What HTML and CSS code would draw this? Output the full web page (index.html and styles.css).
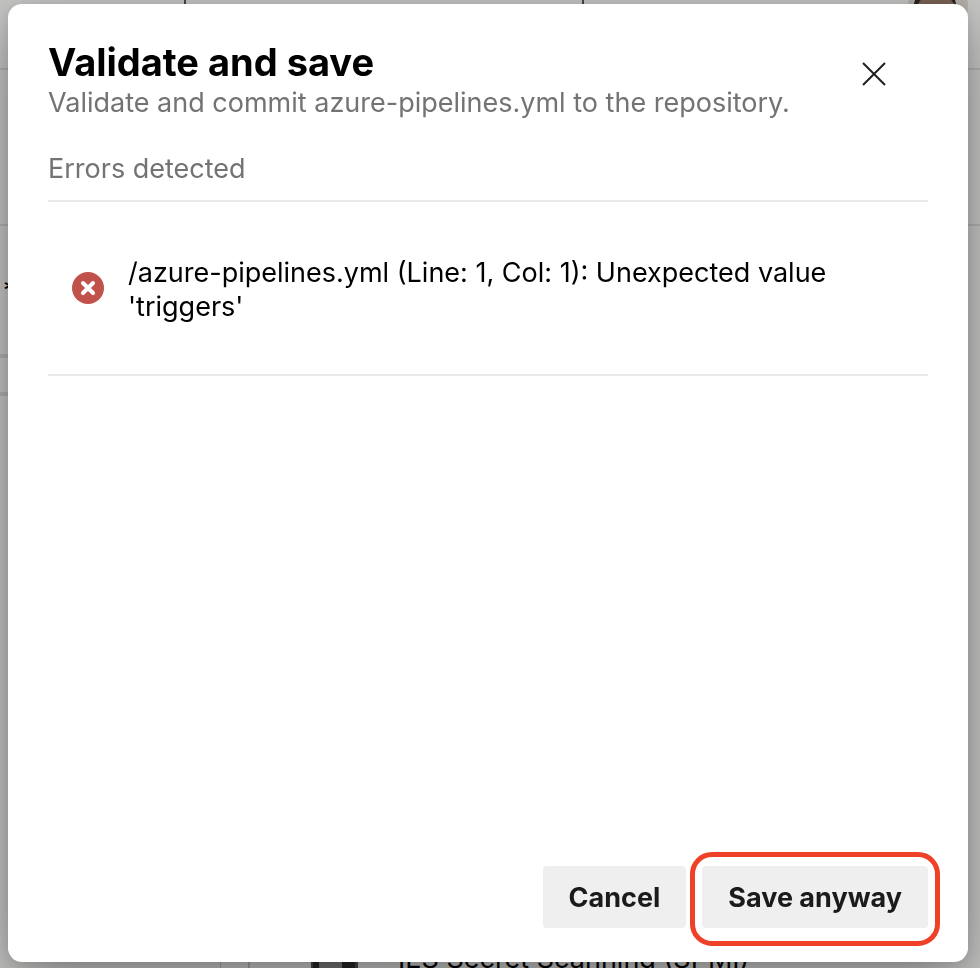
FILE: index.html
```html
<!DOCTYPE html>
<html lang="en">
<head>
<meta charset="utf-8">
<meta name="viewport" content="width=device-width, initial-scale=1">
<title>Validate and save</title>
<link rel="stylesheet" href="styles.css">
</head>
<body>
<div class="page" aria-hidden="true">
  <div class="page-header">
    <span class="search-box"></span>
    <svg class="avatar" viewBox="0 0 60 60"><circle cx="30" cy="30" r="30" fill="#b3b0aa"/><ellipse cx="27" cy="35" rx="22" ry="26" fill="#292523"/><ellipse cx="28" cy="37" rx="20" ry="20" fill="#7a6154"/></svg>
  </div>
  <div class="page-title"></div>
  <div class="page-file">*</div>
  <div class="page-tabs"></div>
  <div class="page-body">
    <div class="page-nav"></div>
    <div class="page-gutter"></div>
    <div class="task">
      <svg class="task-icon" viewBox="0 0 47 60"><path fill="#454545" d="M0 0h47v60H0z"/><path fill="#242424" d="M2 0h6v60H2zM31 0h13v60H31z"/><path fill="#747474" d="M8 0h23v60H8z"/><path stroke="#494949" stroke-dasharray="2 1" d="M9 54h21"/></svg>
      <span>IES Secret Scanning (SPMI)</span>
    </div>
  </div>
</div>
<div class="dialog" role="dialog" aria-modal="true" aria-labelledby="dialog-title">
  <header class="dialog-header">
    <div class="dialog-heading">
      <h1 class="title" id="dialog-title">Validate and save</h1>
      <p class="subtitle">Validate and commit azure-pipelines.yml to the repository.</p>
    </div>
    <button class="close" type="button" aria-label="Close">
      <svg viewBox="0 0 24 24" width="24" height="24"><path d="M1 1l22 22M23 1L1 23" fill="none" stroke="#1f1f1f" stroke-width="2"/></svg>
    </button>
  </header>
  <main class="content">
    <h2 class="section-title">Errors detected</h2>
    <ul class="errors">
      <li class="error">
        <svg class="error-icon" viewBox="0 0 32 32"><circle cx="16" cy="16" r="16" fill="#c1524b"/><path d="M11 11l10 10M21 11L11 21" fill="none" stroke="#fff" stroke-width="4" stroke-linecap="round"/></svg>
        <span class="error-text">/azure-pipelines.yml (Line: 1, Col: 1): Unexpected value 'triggers'</span>
      </li>
    </ul>
  </main>
  <footer class="actions">
    <button class="button" type="button">Cancel</button>
    <button class="button highlighted" type="button">Save anyway</button>
  </footer>
</div>
</body>
</html>
```
FILE: styles.css
```css
* {
  box-sizing: border-box;
}

body {
  margin: 0;
  font-family: Inter, "Liberation Sans", sans-serif;
  font-size: 27px;
  line-height: 34px;
  color: #000;
}

/* Dimmed page behind the dialog */
.page {
  display: flex;
  flex-direction: column;
  height: 100vh;
  overflow: hidden;
  background: #c6c6c5;
}

.page-header {
  display: flex;
  justify-content: space-between;
  height: 70px;
  padding: 0 12px 0 184px;
  border-bottom: 2px solid #b2b2b2;
}

.search-box {
  width: 400px;
  height: 40px;
  border: solid #484848;
  border-width: 0 2px;
}

.avatar {
  width: 60px;
  height: 60px;
  margin-top: -24px;
}

.page-title {
  height: 156px;
  border-bottom: 2px solid #b2b2b2;
}

.page-file {
  width: 50%;
  height: 132px;
  padding: 48px 0 0 3px;
  border-bottom: 4px solid #b2b2b2;
}

.page-tabs {
  width: 50%;
  height: 38px;
  border-bottom: 4px solid #b2b2b2;
}

.page-body {
  display: flex;
  flex: 1;
}

.page-nav {
  width: 221px;
  border-right: 1px solid #a4a4a4;
}

.page-gutter {
  width: 29px;
  border-right: 2px solid #a4a4a4;
}

.task {
  display: flex;
  flex: 1;
  align-items: flex-end;
  gap: 40px;
  padding-left: 61px;
  margin-bottom: -8px;
}

.task-icon {
  width: 47px;
  height: 60px;
}

/* Dialog */
.dialog {
  position: fixed;
  inset: 4px 12px 6px 8px;
  display: flex;
  flex-direction: column;
  padding: 36px 40px 34px;
  background: #fff;
  border-radius: 14px;
  box-shadow: 0 20px 60px rgba(0, 0, 0, 0.36), 0 2px 12px rgba(0, 0, 0, 0.1);
}

.dialog-header {
  display: flex;
  align-items: flex-start;
  justify-content: space-between;
}

.title,
.subtitle,
.section-title {
  margin: 0;
}

.title {
  font-size: 38px;
  line-height: 44px;
  font-weight: 700;
}

.subtitle,
.section-title {
  font-size: 27px;
  font-weight: 400;
  color: #737373;
}

.subtitle {
  margin-top: 2px;
}

.close {
  display: flex;
  margin: 10px 30px 0 0;
  padding: 12px;
  border: 0;
  background: transparent;
}

.content {
  flex: 1;
}

.section-title {
  padding: 32px 0 14px;
}

.errors {
  margin: 0;
  padding: 0;
  list-style: none;
  border: solid #eaeaea;
  border-width: 2px 0;
}

.error {
  display: flex;
  align-items: center;
  gap: 24px;
  padding: 50px 24px;
}

.error-text {
  padding-top: 4px;
}

.error-icon {
  flex: none;
  width: 32px;
  height: 32px;
}

.actions {
  display: flex;
  justify-content: flex-end;
  gap: 16px;
}

.button {
  position: relative;
  padding: 15px 26px 13px;
  border: 0;
  border-radius: 4px;
  background: #efefef;
  color: #1b1b1b;
  font: inherit;
  font-weight: 700;
}

/* Ring drawn around the button to call it out */
.highlighted::after {
  content: "";
  position: absolute;
  inset: -14px -12px -18px;
  border: 5px solid #ee4127;
  border-radius: 22px;
}
```
